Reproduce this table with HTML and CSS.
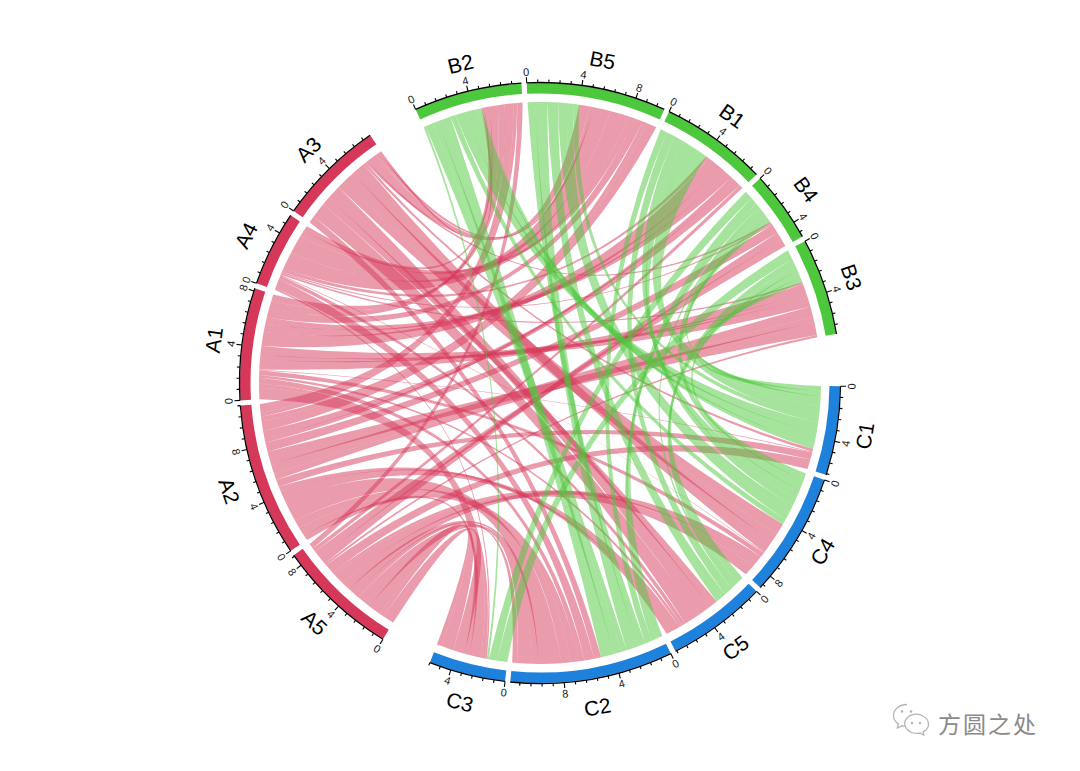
FILE: index.html
```html
<!DOCTYPE html>
<html lang="zh">
<head>
<meta charset="utf-8">
<title>Chord Diagram</title>
<link rel="stylesheet" href="styles.css">
</head>
<body>
<div class="stage">
  <svg id="chart" class="chart" width="1080" height="771" viewBox="0 0 1080 771" xmlns="http://www.w3.org/2000/svg"></svg>
  <div class="watermark">
    <svg class="wx-icon" width="42" height="38" viewBox="0 0 42 38" xmlns="http://www.w3.org/2000/svg">
      <path class="wx-bubble" d="M15 2.5C7.5 2.5 1.5 7.5 1.5 13.6c0 3.4 1.9 6.4 4.9 8.4L5.2 26.2l4.9-2.6c1.5.4 3.1.6 4.8.6 1.2 0 2.3-.1 3.4-.3"/>
      <path class="wx-bubble" d="M28.3 13.2c-5.3-3.6-13.5-2.4-17 2.6 -3.4 4.9-.9 11.3 5.4 13.7 2.6 1 5.6 1.2 8.4.6l3.9 2.2-.9-3.4c3.6-2 5.8-5.3 5.3-8.8-.3-2.6-2-5.1-5.1-6.9z" transform="translate(3 1)"/>
      <circle class="wx-dot" cx="10" cy="9.5" r="1.3"/>
      <circle class="wx-dot" cx="19" cy="9.5" r="1.3"/>
      <circle class="wx-dot" cx="20" cy="21" r="1.2"/>
      <circle class="wx-dot" cx="28" cy="21" r="1.2"/>
    </svg>
    <span class="wm-text">方圆之处</span>
  </div>
</div>
<script src="script.js"></script>
</body>
</html>
```

FILE: styles.css
```css
html, body {
  margin: 0;
  padding: 0;
  background: #ffffff;
}

.stage {
  position: relative;
  width: 1080px;
  height: 771px;
  overflow: hidden;
  background: #ffffff;
}

.chart {
  display: block;
}

.chord-a {
  fill: #D6385A;
  fill-opacity: 0.5;
}

.chord-b {
  fill: #4DC83C;
  fill-opacity: 0.5;
}

.bar-a { fill: #D6385A; }
.bar-b { fill: #4DC83C; }
.bar-c { fill: #1E82DC; }

.axis {
  fill: none;
  stroke: #000000;
  stroke-width: 1.3;
}

.tick {
  stroke: #000000;
  stroke-width: 1.1;
}

.tick-label {
  font-family: "Liberation Sans", Arial, sans-serif;
  font-size: 11px;
  fill: #1a1a1a;
}

.sec-label {
  font-family: "Liberation Sans", Arial, sans-serif;
  font-size: 21px;
  fill: #000000;
}

.watermark {
  position: absolute;
  left: 892px;
  top: 702px;
  display: flex;
  align-items: center;
  gap: 4px;
}

.wx-icon {
  display: block;
}

.wx-bubble {
  fill: #ffffff;
  stroke: #b5b5b5;
  stroke-width: 1.3;
  stroke-linejoin: round;
}

.wx-dot {
  fill: #b5b5b5;
}

.wm-text {
  font-family: "Noto Sans CJK SC", "Noto Sans", sans-serif;
  font-size: 23px;
  letter-spacing: 2px;
  color: #8a8a8a;
  line-height: 1;
  margin-top: 4px;
}
```

FILE: script.js
```js
(function () {
  var NS = 'http://www.w3.org/2000/svg';
  var svg = document.getElementById('chart');
  var CX = 540, CY = 383;
  var R = 281, RB0 = 289.5, RB1 = 300, RA = 300.5;

  var seed = 918273;
  function rnd() {
    seed |= 0; seed = seed + 0x6D2B79F5 | 0;
    var t = Math.imul(seed ^ seed >>> 15, 1 | seed);
    t = t + Math.imul(t ^ t >>> 7, 61 | t) ^ t;
    return ((t ^ t >>> 14) >>> 0) / 4294967296;
  }

  function el(tag, attrs, parent) {
    var e = document.createElementNS(NS, tag);
    for (var k in attrs) e.setAttribute(k, attrs[k]);
    (parent || svg).appendChild(e);
    return e;
  }

  var names = ['A5','A2','A1','A4','A3','B2','B5','B1','B4','B3','C1','C4','C5','C2','C3'];
  var size = {A5:8.9,A2:11.2,A1:8.2,A4:5.5,A3:7.8,B2:7.9,B5:10.2,B1:7.8,B4:5.2,B3:7.1,C1:6.5,C4:9.1,C5:7.3,C2:11.9,C3:5.6};
  var S = {};
  var list = names.map(function (n) {
    var s = { n: n, g: 'ABC'.indexOf(n[0]), size: size[n], ends: [] };
    S[n] = s; return s;
  });
  var total = 0;
  list.forEach(function (s) { total += s.size; });
  var unit = (360 - 30 - 12) / total;
  var ang = 211.5;
  list.forEach(function (s, i) {
    s.start = ang; s.end = ang + s.size * unit; s.mid = (s.start + s.end) / 2;
    var nx = list[(i + 1) % list.length];
    ang = s.end + (nx.g !== s.g ? 10 : 1);
  });

  var A = ['A5','A2','A1','A4','A3'], B = ['B2','B5','B1','B4','B3'], C = ['C1','C4','C5','C2','C3'];
  var redCols = B.concat(C);
  var redRow = [8.9, 11.2, 8.2, 5.5, 7.8];
  var redCol = [3.2, 6.2, 3.7, 2.2, 4.4, 1.6, 4.8, 4.6, 6.9, 4.0];
  var grRow = [4.7, 4.0, 4.1, 3.0, 2.7];
  var grCol = [4.9, 4.3, 2.7, 5.0, 1.6];

  function randMat(n, m, p) {
    var M = [];
    for (var i = 0; i < n; i++) {
      var row = [];
      for (var j = 0; j < m; j++) row.push(rnd() < p ? 0 : Math.pow(0.12 + rnd(), 1.8));
      M.push(row);
    }
    return M;
  }
  function ipf(M, rt, ct) {
    for (var it = 0; it < 400; it++) {
      for (var i = 0; i < M.length; i++) {
        var s = 0; for (var j = 0; j < M[i].length; j++) s += M[i][j];
        if (s > 0) for (j = 0; j < M[i].length; j++) M[i][j] *= rt[i] / s;
      }
      for (j = 0; j < ct.length; j++) {
        var c = 0; for (i = 0; i < M.length; i++) c += M[i][j];
        if (c > 0) for (i = 0; i < M.length; i++) M[i][j] *= ct[j] / c;
      }
    }
    return M;
  }
  var RM = ipf(randMat(5, 10, 0.15), redRow, redCol);
  var GM = ipf(randMat(5, 5, 0.1), grRow, grCol);

  var links = [];
  function addPair(src, tgt, v, cls) {
    if (v < 0.015) return;
    var k = Math.min(3, 1 + Math.floor(v / 0.85));
    var fr = [], fs = 0;
    for (var i = 0; i < k; i++) { var f = 0.35 + rnd(); fr.push(f); fs += f; }
    for (i = 0; i < k; i++) {
      links.push({ src: S[src], tgt: S[tgt], val: v * fr[i] / fs, cls: cls, idx: i,
        ks: (rnd() - 0.5) * 22, kt: (rnd() - 0.5) * 22 });
    }
  }
  for (var i = 0; i < 5; i++) for (var j = 0; j < 10; j++) addPair(A[i], redCols[j], RM[i][j], 'chord-a');
  for (i = 0; i < 5; i++) for (j = 0; j < 5; j++) addPair(B[i], C[j], GM[i][j], 'chord-b');

  function cwd(from, to) { return ((to.mid - from.mid) % 360 + 360) % 360; }
  links.forEach(function (l) {
    l.src.ends.push({ l: l, role: 0, key: cwd(l.src, l.tgt) + l.ks });
    l.tgt.ends.push({ l: l, role: 1, key: cwd(l.tgt, l.src) + l.kt });
  });
  list.forEach(function (s) {
    s.ends.sort(function (x, y) {
      if (x.role !== y.role) return x.role - y.role;
      return y.key - x.key;
    });
    var used = 0; s.ends.forEach(function (e) { used += e.l.val; });
    var sc = s.size / used;
    var p = s.start;
    s.ends.forEach(function (e) {
      var a0 = p; p += e.l.val * sc * unit;
      if (e.role === 0) { e.l.s0 = a0; e.l.s1 = p; } else { e.l.t0 = a0; e.l.t1 = p; }
    });
  });

  function P(r, d) { var t = d * Math.PI / 180; return [CX + r * Math.sin(t), CY - r * Math.cos(t)]; }
  function f(p) { return p[0].toFixed(2) + ' ' + p[1].toFixed(2); }
  var K = 0.16;
  function ctrl(p, q) { return [CX + K * ((p[0] + q[0]) / 2 - CX), CY + K * ((p[1] + q[1]) / 2 - CY)]; }
  function ribbon(l) {
    var p0 = P(R, l.s0), p1 = P(R, l.s1), q0 = P(R, l.t0), q1 = P(R, l.t1);
    return 'M' + f(p0) + 'A' + R + ' ' + R + ' 0 0 1 ' + f(p1) +
      'Q' + f(ctrl(p1, q0)) + ' ' + f(q0) +
      'A' + R + ' ' + R + ' 0 0 1 ' + f(q1) +
      'Q' + f(ctrl(q1, p0)) + ' ' + f(p0) + 'Z';
  }

  var gLinks = el('g', { 'class': 'links' });
  var order = links.slice().sort(function (a, b) {
    if (a.cls !== b.cls) return a.cls < b.cls ? -1 : 1;
    return 0;
  });
  order.forEach(function (l) {
    el('path', { d: ribbon(l), 'class': l.cls }, gLinks);
  });

  function annulus(r0, r1, a0, a1) {
    var la = (a1 - a0) > 180 ? 1 : 0;
    return 'M' + f(P(r1, a0)) + 'A' + r1 + ' ' + r1 + ' 0 ' + la + ' 1 ' + f(P(r1, a1)) +
      'L' + f(P(r0, a1)) + 'A' + r0 + ' ' + r0 + ' 0 ' + la + ' 0 ' + f(P(r0, a0)) + 'Z';
  }
  function rot(a) { var m = (a % 360 + 360) % 360; return (m > 90 && m < 270) ? m - 180 : m; }

  var gBars = el('g', { 'class': 'bars' });
  var gAxis = el('g', { 'class': 'axes' });
  var barCls = ['bar-a', 'bar-b', 'bar-c'];
  list.forEach(function (s) {
    el('path', { d: annulus(RB0, RB1, s.start, s.end), 'class': barCls[s.g] }, gBars);
    el('path', { d: 'M' + f(P(RA, s.start)) + 'A' + RA + ' ' + RA + ' 0 0 1 ' + f(P(RA, s.end)), 'class': 'axis' }, gAxis);
    var n = Math.floor(s.size / 0.8 + 1e-6);
    for (var k = 0; k <= n; k++) {
      var v = k * 0.8;
      var major = (k % 5 === 0);
      var a = s.start + v * unit;
      var p0 = P(RA, a), p1 = P(RA + (major ? 5.5 : 3), a);
      el('line', { x1: p0[0].toFixed(2), y1: p0[1].toFixed(2), x2: p1[0].toFixed(2), y2: p1[1].toFixed(2), 'class': 'tick' }, gAxis);
      if (major) {
        var lp = P(311.5, a);
        var t = el('text', { 'class': 'tick-label', 'text-anchor': 'middle', 'dominant-baseline': 'central',
          transform: 'translate(' + lp[0].toFixed(2) + ' ' + lp[1].toFixed(2) + ') rotate(' + rot(a).toFixed(2) + ')' }, gAxis);
        t.textContent = String(Math.round(v));
      }
    }
    var np = P(329, s.mid);
    var tl = el('text', { 'class': 'sec-label', 'text-anchor': 'middle', 'dominant-baseline': 'central',
      transform: 'translate(' + np[0].toFixed(2) + ' ' + np[1].toFixed(2) + ') rotate(' + rot(s.mid).toFixed(2) + ')' }, gAxis);
    tl.textContent = s.n;
  });
})();
```
